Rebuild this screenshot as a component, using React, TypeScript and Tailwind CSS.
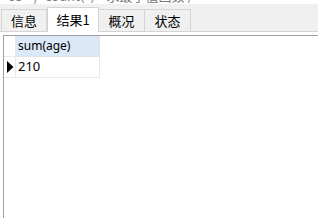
import React from "react";

const cjk = { fontFamily: '"Noto Sans CJK SC", "Noto Sans", sans-serif' };

function Tab({ label, active, w }: { label: string; active?: boolean; w: string }) {
  if (active) {
    return (
      <div
        className={`${w} h-[25px] -mb-px bg-white border border-b-0 border-[#d4d4d4] flex items-center justify-center text-[13px] text-black`}
        style={cjk}
      >
        <span className="pb-[1px]">{label}</span>
      </div>
    );
  }
  return (
    <div
      className={`${w} h-[22px] border border-b-0 border-l-0 border-[#d4d4d4] bg-[#f0f0f0] flex items-center justify-center text-[13px] text-black`}
      style={cjk}
    >
      <span className="pt-[1px]">{label}</span>
    </div>
  );
}

export default function App() {
  return (
    <div className="w-[318px] h-[218px] bg-white overflow-hidden flex flex-col">
      <div className="h-[4px] overflow-hidden shrink-0">
        <div
          className="-mt-[12px] pl-[8px] text-[13px] leading-[16px] text-[#7a7a7a] whitespace-nowrap"
          style={cjk}
        >
          65&nbsp;&nbsp;&nbsp;&nbsp;/&nbsp;&nbsp;count(*)&nbsp;&nbsp;&nbsp;&nbsp;求最小值函数&nbsp;)
        </div>
      </div>
      <div className="h-[28px] shrink-0 bg-[#f0f0f0] border-b border-[#d4d4d4] flex items-end pl-[1px]">
        <div className="w-[46px] h-[22px] border border-b-0 border-[#d4d4d4] bg-[#f0f0f0] flex items-center justify-center text-[13px] text-black" style={cjk}>
          <span className="pt-[1px]">信息</span>
        </div>
        <Tab label="结果1" active w="w-[52px]" />
        <Tab label="概况" w="w-[46px]" />
        <Tab label="状态" w="w-[46px]" />
      </div>
      <div className="h-[3px] shrink-0" />
      <div className="flex-1 ml-[3px] border-l border-t border-[#a0a0a0] flex flex-col">
        <div className="flex h-[21px]">
          <div className="w-[12px] border-r border-b border-[#e8e8e8]" />
          <div
            className="w-[84px] bg-[#dae8f8] border-r border-b border-[#e2e2e2] flex items-center pl-[2px] text-[12px] text-black"
            style={{ fontFamily: '"Noto Sans", sans-serif' }}
          >
            sum(age)
          </div>
        </div>
        <div className="flex h-[21px]">
          <div className="w-[12px] border-r border-b border-[#e8e8e8] flex items-center justify-center">
            <svg width="8" height="12" viewBox="0 0 8 12">
              <path d="M1 0 L7.5 6 L1 12 Z" fill="#000" />
            </svg>
          </div>
          <div
            className="w-[84px] border-r border-b border-[#e8e8e8] flex items-center pl-[2px] text-[13px] text-black"
            style={{ fontFamily: '"Noto Sans", sans-serif' }}
          >
            210
          </div>
        </div>
      </div>
    </div>
  );
}
